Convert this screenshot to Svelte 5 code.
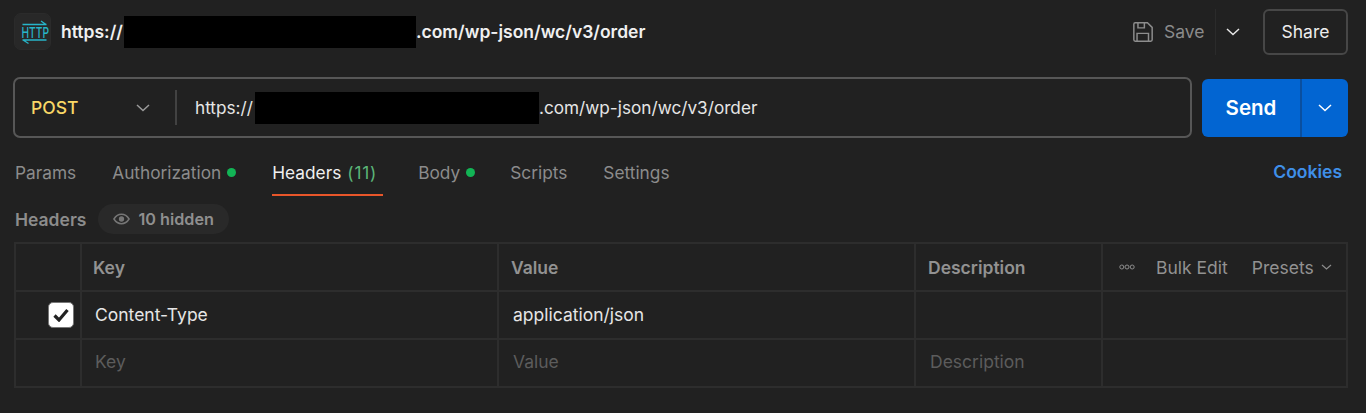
<script>
  const tabs = [
    { label: 'Params', gap: 36 },
    { label: 'Authorization', dot: true, gap: 36 },
    { label: 'Headers', count: '(11)', active: true, gap: 35 },
    { label: 'Body', dot: true, gap: 35 },
    { label: 'Scripts', gap: 36 },
    { label: 'Settings', gap: 0 }
  ];
</script>

<div class="page">
  <header class="top">
    <div class="http-icon">
      <svg width="28" height="28" viewBox="0 0 28 28" fill="none" stroke="#27b5c9" stroke-width="1.300">
        <path d="M1.500 6.500h24M20 3l5 3.500" />
        <path d="M1.500 22h24M2 22l5.500 3.500" />
      </svg>
      <span class="http-text">HTTP</span>
    </div>
    <h1 class="title">https://<span class="redact-a"></span>.com/wp-json/wc/v3/order</h1>
    <div class="actions">
      <svg class="save-icon" width="22" height="22" viewBox="0 0 24 24" fill="none" stroke="#8d8d8d" stroke-width="1.600">
        <path d="M2 3.500a1.500 1.500 0 0 1 1.500-1.500h13.300l5.200 5v13.500a1.500 1.500 0 0 1-1.500 1.500h-17a1.500 1.500 0 0 1-1.500-1.500z" />
        <path d="M6.500 2v5.500h7V2M5.500 22v-8.500h12.500V22" />
      </svg>
      <span class="save">Save</span>
      <span class="save-div"></span>
      <svg class="chev-save" width="14" height="8" viewBox="0 0 14 8" fill="none" stroke="#e6e6e6" stroke-width="1.500"><path d="M1 1l6 5.500 6-5.500" /></svg>
      <button class="share">Share</button>
    </div>
  </header>

  <div class="request">
    <div class="url-box">
      <div class="method">
        <span>POST</span>
        <svg width="14" height="8" viewBox="0 0 14 8" fill="none" stroke="#9b9b9b" stroke-width="1.500"><path d="M1 1l6 5.500 6-5.500" /></svg>
      </div>
      <div class="url">https://<span class="redact-b"></span>.com/wp-json/wc/v3/order</div>
    </div>
    <div class="send">
      <span class="send-label">Send</span>
      <span class="send-arrow">
        <svg width="14" height="8" viewBox="0 0 14 8" fill="none" stroke="#fff" stroke-width="1.500"><path d="M1 1l6 5.500 6-5.500" /></svg>
      </span>
    </div>
  </div>

  <nav class="tabs">
    {#each tabs as t}
      <div class="tab" class:active={t.active} style="margin-right:{t.gap}px">
        {t.label}{#if t.count}<span class="count">{t.count}</span>{/if}{#if t.dot}<span class="dot"></span>{/if}
      </div>
    {/each}
    <span class="cookies">Cookies</span>
  </nav>

  <div class="sub">
    <span class="sub-title">Headers</span>
    <span class="pill">
      <svg width="17" height="12" viewBox="0 0 18 12" fill="none" stroke="#767676" stroke-width="1.600">
        <path d="M1 6c2-3.200 4.800-5 8-5s6 1.800 8 5c-2 3.200-4.800 5-8 5s-6-1.800-8-5z" />
        <circle cx="9" cy="6" r="2" fill="#767676" />
      </svg>
      10 hidden
    </span>
  </div>

  <div class="table">
    <div class="row head">
      <div class="c c0"></div>
      <div class="c c1">Key</div>
      <div class="c c2">Value</div>
      <div class="c c3">Description</div>
      <div class="c c4">
        <svg width="16" height="6" viewBox="0 0 16 6" fill="none" stroke="#8c8c8c" stroke-width="1"><circle cx="2.800" cy="3" r="2" /><circle cx="8" cy="3" r="2" /><circle cx="13.200" cy="3" r="2" /></svg>
        <span class="bulk">Bulk Edit</span>
        <span class="presets">Presets
          <svg width="11" height="6" viewBox="0 0 11 6" fill="none" stroke="#8c8c8c" stroke-width="1.200"><path d="M1 1l4.500 4 4.500-4" /></svg>
        </span>
      </div>
    </div>
    <div class="row mid">
      <div class="c c0"><span class="check">
        <svg width="16" height="14" viewBox="0 0 16 14" fill="none" stroke="#222" stroke-width="3.200"><path d="M1.500 7.500l4.500 4.500 8.500-10" /></svg>
      </span></div>
      <div class="c c1 val">Content-Type</div>
      <div class="c c2 val">application/json</div>
      <div class="c c3 val"></div>
      <div class="c c4"></div>
    </div>
    <div class="row last">
      <div class="c c0"></div>
      <div class="c c1 val ph">Key</div>
      <div class="c c2 val ph">Value</div>
      <div class="c c3 val ph">Description</div>
      <div class="c c4"></div>
    </div>
  </div>
</div>

<style>
  :global(body) { margin: 0; background: #212121; }
  .page {
    width: 1366px; height: 413px; box-sizing: border-box; overflow: hidden;
    background: #212121; font-family: Inter, "Liberation Sans", sans-serif;
    padding: 0 18px 0 14px; color: #8f8f8f; font-size: 17.500px;
  }
  .top { display: flex; align-items: center; height: 63px; }
  .http-icon {
    width: 37px; height: 37px; box-sizing: border-box; border: 1px solid #2b2b2b;
    border-radius: 7px; background: #282828; display: grid; place-items: center;
  }
  .http-icon svg { grid-area: 1 / 1; }
  .http-text {
    grid-area: 1 / 1; font-size: 15px; color: #27b5c9; font-weight: 500; line-height: 1;
    transform: translateY(1px) scaleX(0.68);
  }
  .title { margin: 0 0 0 10px; font-size: 17.500px; font-weight: 600; color: #f0f0f0; display: flex; align-items: center; }
  .redact-a { display: block; width: 292px; height: 32px; margin-left: 1px; background: #000; }
  .actions { margin-left: auto; display: flex; align-items: center; }
  .save-icon { margin-right: 10px; }
  .save { color: #8b8b8b; width: 41px; }
  .save-div { width: 1px; height: 46px; background: #2b2b2b; margin: 0 10px 0 10px; }
  .chev-save { margin-right: 23px; }
  .share {
    width: 85px; height: 46px; box-sizing: border-box; background: transparent; border: 2px solid #474747;
    border-radius: 6px; color: #ededed; font: inherit; padding: 0;
  }
  .request { display: flex; align-items: center; gap: 10px; margin-top: 14px; height: 61px; margin-left: -1px; }
  .url-box {
    width: 1179px; height: 61px; box-sizing: border-box; border: 2px solid #575757; border-radius: 7px;
    display: flex; align-items: center;
  }
  .method {
    width: 162px; height: 35px; box-sizing: border-box; border-right: 2px solid #424242; display: flex; align-items: center;
    justify-content: space-between; padding: 0 25px 0 16px; color: #f9d766; font-weight: 500;
  }
  .url { margin-left: 18px; color: #e6e6e6; display: flex; align-items: center; font-size: 17.200px; }
  .redact-b { display: block; width: 284px; height: 32px; margin-left: 2px; background: #000; }
  .send {
    width: 146px; height: 58px; margin-top: 1px; border-radius: 6px; background: #0265d2; display: flex; color: #fff;
  }
  .send-label { flex: 1; display: grid; place-items: center; padding-bottom: 1px; font-size: 20.500px; font-weight: 600; border-right: 2px solid #0a4f9f; }
  .send-arrow { width: 46px; display: grid; place-items: center; }
  .tabs { display: flex; align-items: flex-start; margin-top: 21px; height: 36px; padding-left: 1px; }
  .tab { display: flex; align-items: center; height: 26px; position: relative; color: #8c8c8c; font-size: 17.300px; }
  .tab.active { color: #f0f0f0; padding-right: 6px; }
  .tab.active::after {
    content: ""; position: absolute; left: 0; right: 0; bottom: -10.500px; height: 2px; background: #e8562a;
  }
  .count { color: #5bb578; margin-left: 6px; letter-spacing: 0.800px; }
  .dot { width: 9px; height: 9px; border-radius: 50%; background: #12b455; margin-left: 6px; }
  .cookies { margin-left: auto; margin-right: 6px; color: #3f8fe8; font-weight: 600; line-height: 26px; }
  .sub { display: flex; align-items: center; margin-top: 8px; height: 32px; padding-left: 1px; }
  .sub-title { font-weight: 600; color: #8c8c8c; }
  .pill {
    display: flex; align-items: center; gap: 8px; margin-left: 12px; height: 30px; padding: 0 15px; border-radius: 15px;
    background: #292929; color: #8f8f8f; font-size: 16.200px; font-weight: 600;
  }
  .table { margin-top: 7px; border: 2px solid #2d2d2d; width: 1334px; box-sizing: border-box; }
  .row { display: grid; grid-template-columns: 66px 417px 417px 187px 1fr; height: 48px; box-sizing: border-box; border-bottom: 2px solid #2d2d2d; }
  .row.last { border-bottom: 0; height: 46px; }
  .mid .c { padding-bottom: 1px; }
  .last .c { padding-bottom: 3px; }
  .c { display: flex; align-items: center; box-sizing: border-box; border-right: 2px solid #2d2d2d; padding-left: 11px; color: #e6e6e6; }
  .c2, .c3 { padding-left: 12px; }
  .c4 { border-right: 0; }
  .head .c { color: #929292; font-weight: 600; }
  .head .c4 { font-weight: 400; padding-left: 16px; }
  .c4 .bulk { margin-left: 21px; }
  .presets { margin-left: 24px; display: flex; align-items: center; gap: 7px; }
  .val { padding-left: 13px; }
  .c2.val, .c3.val { padding-left: 14px; }
  .ph { color: #5c5c5c; }
  .row .c0 { justify-content: flex-end; padding: 0 6px 0 0; }
  .check {
    width: 26px; height: 26px; box-sizing: border-box; border-radius: 5px; background: #fff; border: 1px solid #777;
    display: grid; place-items: center;
  }
</style>
